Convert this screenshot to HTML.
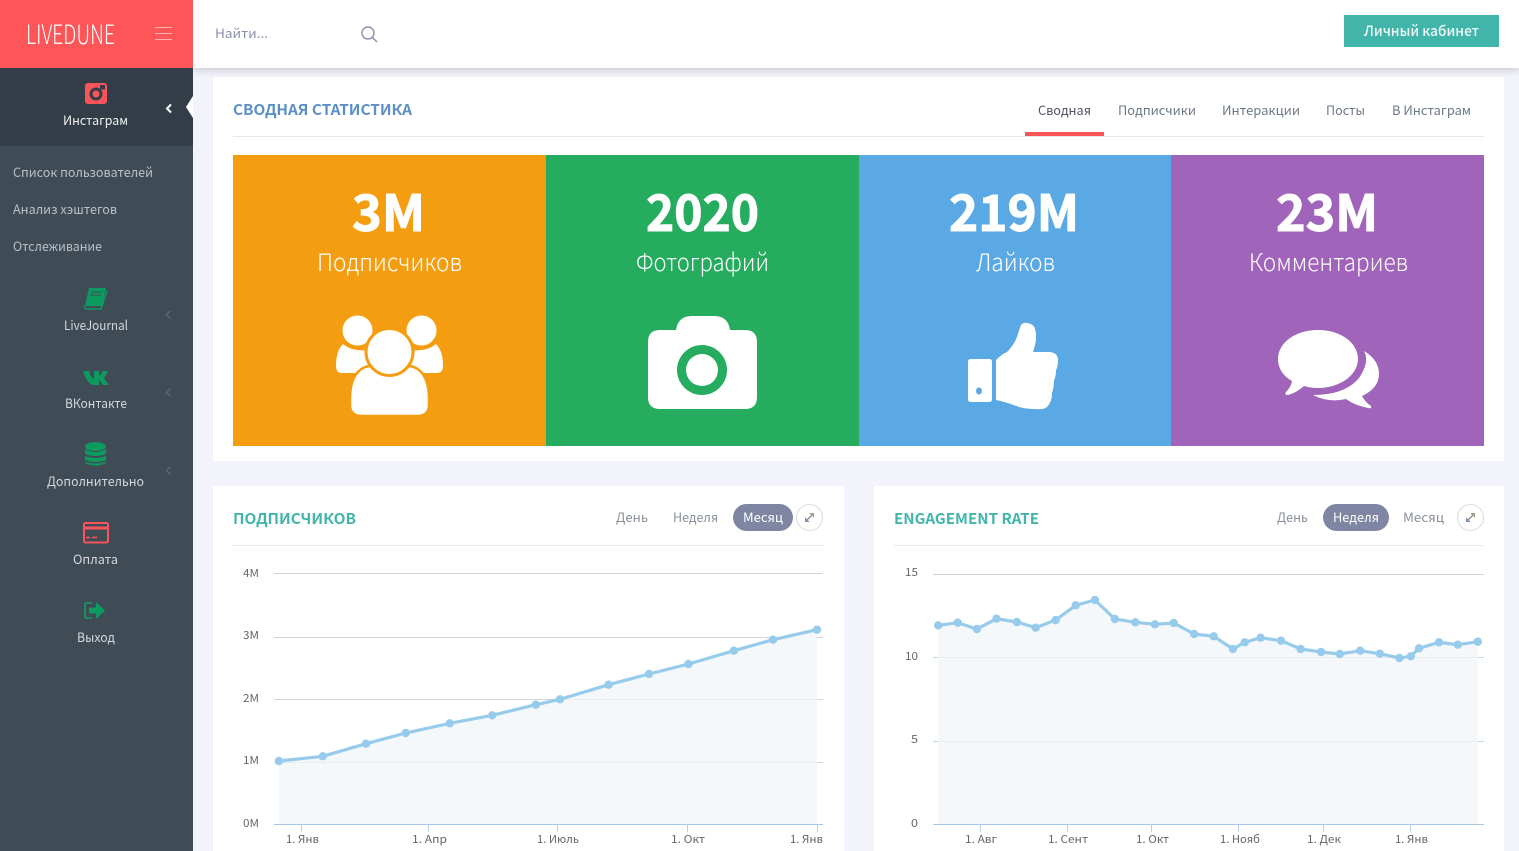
<!DOCTYPE html>
<html lang="ru"><head><meta charset="utf-8"><title>LiveDune</title>
<style>
html,body{margin:0;padding:0;width:1519px;height:851px;overflow:hidden;background:#f2f3fb}
body{position:relative;font-family:"Noto Sans CJK JP","Liberation Sans",sans-serif}
div{position:absolute}
svg{position:absolute;left:0;top:0}
text{font-family:"Noto Sans CJK JP","Liberation Sans",sans-serif;font-size:13px}
.side{fill:#d3d7da}
.sub{fill:#b9c0c5}
.tab{fill:#6d7887}
.big{font-size:50px;font-weight:700;fill:#fff;stroke:#fff;stroke-width:1}
.lab{font-size:24px;fill:#fff;font-weight:300}
.ttl{font-size:15px;font-weight:700}
.ax{font-size:11px;fill:#666}
.pill{fill:#8a919c}
</style></head><body>
<div style="left:193px;top:0;width:1326px;height:68px;background:#fff;box-shadow:0 2px 7px rgba(90,90,110,.28)"></div>
<div style="left:0;top:68px;width:193px;height:783px;background:#3f4c56"></div>
<div style="left:0;top:68px;width:193px;height:78px;background:#323d47"></div>
<div style="left:0;top:0;width:193px;height:68px;background:#fd5558"></div>
<div style="left:213px;top:77px;width:1291px;height:384px;background:#fff"></div>
<div style="left:213px;top:486px;width:631px;height:365px;background:#fff"></div>
<div style="left:874px;top:486px;width:630px;height:365px;background:#fff"></div>
<div style="left:233px;top:155px;width:313px;height:291px;background:#f59d10"></div>
<div style="left:546px;top:155px;width:313px;height:291px;background:#26ac5e"></div>
<div style="left:859px;top:155px;width:312px;height:291px;background:#5aa9e4"></div>
<div style="left:1171px;top:155px;width:313px;height:291px;background:#a064bb"></div>
<div style="left:1344px;top:15px;width:155px;height:32px;background:#42b5ab"></div>
<div style="left:233px;top:136px;width:1251px;height:1px;background:#e6e7ec"></div>
<div style="left:1025px;top:132px;width:79px;height:4px;background:#f9545a"></div>
<div style="left:233px;top:545px;width:590px;height:1px;background:#e6eaee"></div>
<div style="left:894px;top:545px;width:590px;height:1px;background:#e6eaee"></div>

<svg width="1519" height="851" viewBox="0 0 1519 851">
<!-- logo + header -->
<text x="26" y="44" textLength="89" lengthAdjust="spacingAndGlyphs" style="font-size:27px;font-weight:300;fill:#fff">LIVEDUNE</text>
<path d="M155 27.500H172M155 33.500H172M155 39.500H172" stroke="#ffb3b3" stroke-width="1" fill="none"/>
<text x="215" y="38" textLength="53" lengthAdjust="spacingAndGlyphs" style="fill:#8a90a8">Найти...</text>
<circle cx="368" cy="33" r="6" fill="none" stroke="#8a90a8" stroke-width="1.400"/>
<path d="M372.500 37.500L377 42" stroke="#8a90a8" stroke-width="1.500" fill="none"/>
<text x="1364" y="36" textLength="115" lengthAdjust="spacingAndGlyphs" style="font-size:14px;font-weight:500;fill:#f1fbfa">Личный кабинет</text>

<!-- sidebar -->
<rect x="85" y="83" width="22" height="21" rx="3" fill="#f9545a"/>
<circle cx="96" cy="94" r="6.500" fill="#323d47"/><circle cx="96" cy="94" r="3.500" fill="#f9545a"/>
<rect x="100" y="85" width="5" height="4.500" fill="#323d47"/>
<text x="63" y="125" textLength="65" lengthAdjust="spacingAndGlyphs" style="fill:#eef0f1">Инстаграм</text>
<path d="M171 104.500L167 108.500L171 112.500" fill="none" stroke="#fff" stroke-width="2"/>
<path d="M193 96L186 107L193 118Z" fill="#fff"/>
<text class="sub" x="13" y="177" textLength="140" lengthAdjust="spacingAndGlyphs">Список пользователей</text>
<text class="sub" x="13" y="214" textLength="104" lengthAdjust="spacingAndGlyphs">Анализ хэштегов</text>
<text class="sub" x="13" y="251" textLength="89" lengthAdjust="spacingAndGlyphs">Отслеживание</text>

<path d="M89 288H106L102 306H85Z" fill="#0d9a5e"/>
<path d="M84 306Q85 309 88 309H101L107 291" fill="none" stroke="#0d9a5e" stroke-width="1.500"/>
<path d="M91 292H102M90 295H101" stroke="#3f4c56" stroke-width="1"/>
<text class="side" x="64" y="330" textLength="64" lengthAdjust="spacingAndGlyphs">LiveJournal</text>
<path d="M170.500 310.500L166.500 314.500L170.500 318.500" fill="none" stroke="#5b666f" stroke-width="1.500"/>

<path d="M83 371H89Q91 378 94 379V371H99V376Q101 375 103 371H108Q106 376 103.500 378Q106 380 108.500 385H103Q100 380 99 380V385H94Q87 384 83 371Z" fill="#0d9a5e"/>
<text class="side" x="65" y="408" textLength="62" lengthAdjust="spacingAndGlyphs">ВКонтакте</text>
<path d="M170.500 388.500L166.500 392.500L170.500 396.500" fill="none" stroke="#5b666f" stroke-width="1.500"/>

<ellipse cx="95.500" cy="446.500" rx="10.500" ry="4.500" fill="#0d9a5e"/>
<path d="M85 449Q95.500 455 106 449V454Q95.500 458 85 454ZM85 456Q95.500 460 106 456V460Q95.500 464 85 460ZM85 461.500Q95.500 465.500 106 461.500V463Q95.500 468 85 463Z" fill="#0d9a5e"/>
<text class="side" x="47" y="486" textLength="97" lengthAdjust="spacingAndGlyphs">Дополнительно</text>
<path d="M170.500 466.500L166.500 470.500L170.500 474.500" fill="none" stroke="#5b666f" stroke-width="1.500"/>

<rect x="84" y="523" width="24" height="19.500" rx="1.500" fill="none" stroke="#f9545a" stroke-width="2"/>
<rect x="84" y="526.500" width="24" height="3" fill="#f9545a"/>
<path d="M86 537.500H90M92 537.500H97" stroke="#f9545a" stroke-width="1.500"/>
<text class="side" x="73" y="564" textLength="45" lengthAdjust="spacingAndGlyphs">Оплата</text>

<path d="M92 603H87Q85 603 85 605V616Q85 618 87 618H92" fill="none" stroke="#0d9a5e" stroke-width="1.800"/>
<path d="M89 607.500H96V602L105 610.500L96 619V613.500H89Z" fill="#0d9a5e"/>
<text class="side" x="77" y="642" textLength="38" lengthAdjust="spacingAndGlyphs">Выход</text>

<!-- summary header -->
<text class="ttl" x="233" y="115" textLength="179" lengthAdjust="spacingAndGlyphs" fill="#5b8fc6">СВОДНАЯ СТАТИСТИКА</text>
<text x="1038" y="115" textLength="53" lengthAdjust="spacingAndGlyphs" style="fill:#4f5662">Сводная</text>
<text class="tab" x="1118" y="115" textLength="78" lengthAdjust="spacingAndGlyphs">Подписчики</text>
<text class="tab" x="1222" y="115" textLength="78" lengthAdjust="spacingAndGlyphs">Интеракции</text>
<text class="tab" x="1326" y="115" textLength="39" lengthAdjust="spacingAndGlyphs">Посты</text>
<text class="tab" x="1392" y="115" textLength="79" lengthAdjust="spacingAndGlyphs">В Инстаграм</text>

<!-- tiles -->
<text class="big" x="352" y="231" textLength="73" lengthAdjust="spacingAndGlyphs">3M</text>
<text class="big" x="646" y="231" textLength="113" lengthAdjust="spacingAndGlyphs">2020</text>
<text class="big" x="949" y="231" textLength="130" lengthAdjust="spacingAndGlyphs">219M</text>
<text class="big" x="1276" y="231" textLength="102" lengthAdjust="spacingAndGlyphs">23M</text>
<text class="lab" x="317" y="271" textLength="145" lengthAdjust="spacingAndGlyphs">Подписчиков</text>
<text class="lab" x="636" y="271" textLength="133" lengthAdjust="spacingAndGlyphs">Фотографий</text>
<text class="lab" x="976" y="271" textLength="79" lengthAdjust="spacingAndGlyphs">Лайков</text>
<text class="lab" x="1249" y="271" textLength="159" lengthAdjust="spacingAndGlyphs">Комментариев</text>

<!-- users icon -->
<path d="M343 344Q352 352 370 350V373H342Q336 373 336 366Q336 351 343 344Z" fill="#fff"/>
<path d="M436 344Q427 352 409 350V373H437Q443 373 443 366Q443 351 436 344Z" fill="#fff"/>
<circle cx="357.500" cy="330.500" r="16" fill="#fff" stroke="#f59d10" stroke-width="2"/>
<circle cx="421.500" cy="330.500" r="16" fill="#fff" stroke="#f59d10" stroke-width="2"/>
<path d="M350 398C350 380 357 368 369 366H410C422 368 429 380 429 398V405Q429 416 417 416H362Q350 416 350 405Z" fill="#fff" stroke="#f59d10" stroke-width="2.500"/>
<circle cx="389.500" cy="352" r="23.500" fill="#fff" stroke="#f59d10" stroke-width="3"/>

<!-- camera -->
<path d="M648 342Q648 330 660 330H676Q678 316 692 316H714Q728 316 730 330H745Q757 330 757 342V397Q757 409 745 409H660Q648 409 648 397Z" fill="#fff"/>
<circle cx="702" cy="370" r="25" fill="#26ac5e"/><circle cx="702" cy="370" r="16" fill="#fff"/>

<!-- thumb -->
<rect x="968" y="359" width="24" height="43" rx="2.500" fill="#fff"/><ellipse cx="979" cy="391" rx="3" ry="3.500" fill="#5aa9e4"/>
<path d="M996 360Q1002 354 1007 352Q1014 345 1017 337Q1019 330 1021 325Q1024 322 1027 323Q1034 324 1035 329Q1038 337 1033 352H1050Q1058 353 1058 360Q1058 367 1056 370Q1056 377 1054 380Q1054 388 1052 393Q1052 402 1047 407Q1043 410 1035 409Q1026 409 1019 407Q1006 402 996 400Z" fill="#fff"/>

<!-- chat -->
<path d="M1364 351Q1379 360 1379 374Q1379 388 1362 396Q1365 402 1371 406Q1372 409 1368 408Q1354 405 1346 399Q1328 403 1313 395Q1345 395 1359 378Q1370 362 1364 351Z" fill="#fff"/>
<path d="M1318 330C1341 330 1358 343 1358 359C1358 375 1340 388 1318 388Q1310 388 1304 386Q1296 393 1288 395Q1284 395 1286 392Q1291 387 1292 381C1283 376 1278 368 1278 359C1278 343 1295 330 1318 330Z" fill="#fff"/>

<!-- chart 1 -->
<text class="ttl" x="233" y="524" textLength="123" lengthAdjust="spacingAndGlyphs" fill="#42b5ab">ПОДПИСЧИКОВ</text>
<text class="pill" x="616" y="522" textLength="32" lengthAdjust="spacingAndGlyphs">День</text>
<text class="pill" x="673" y="522" textLength="45" lengthAdjust="spacingAndGlyphs">Неделя</text>
<rect x="733" y="504" width="60" height="27" rx="13.500" fill="#7f86a3"/>
<text x="743" y="522" textLength="40" lengthAdjust="spacingAndGlyphs" style="fill:#fff">Месяц</text>
<circle cx="809.500" cy="517.500" r="13" fill="#fff" stroke="#dcdcdc"/>
<path d="M806 521L813 514" stroke="#8a919c" stroke-width="1.400"/>
<path d="M810.500 513.500H813.500V516.500Z" fill="#a89a88" stroke="#a89a88"/><path d="M805.500 518.500V521.500H808.500Z" fill="#7d95ad" stroke="#7d95ad"/>

<path d="M274 573.500H823M274 637.500H823M274 699.500H823M274 762.500H823" stroke="#cdd5da" fill="none"/>
<path d="M279 761L322.800 756.300L366 743.700L405.700 733L449.700 723.300L492.200 715.300L535.900 704.700L560 699.300L608.600 684.700L649 674L688.500 664L733.900 650.700L773 639.700L817 629.700V824H279Z" fill="#f4f8fb"/>
<path d="M560 699.500H817M279 762.500H817" stroke="#e6eef1" fill="none"/>
<path d="M274 824.500H823" stroke="#a9c8e8"/>
<path d="M301.500 824V832M428.500 824V832M557.500 824V832M687.500 824V832M817.500 824V832" stroke="#b9cfe4"/>
<polyline points="279,761 322.800,756.300 366,743.700 405.700,733 449.700,723.300 492.200,715.300 535.900,704.700 560,699.300 608.600,684.700 649,674 688.500,664 733.900,650.700 773,639.700 817,629.700" fill="none" stroke="#97cbec" stroke-width="3.200"/>
<g fill="#97cbec">
<circle cx="279" cy="761" r="4.200"/><circle cx="322.800" cy="756.300" r="4.200"/><circle cx="366" cy="743.700" r="4.200"/><circle cx="405.700" cy="733" r="4.200"/><circle cx="449.700" cy="723.300" r="4.200"/><circle cx="492.200" cy="715.300" r="4.200"/><circle cx="535.900" cy="704.700" r="4.200"/><circle cx="560" cy="699.300" r="4.200"/><circle cx="608.600" cy="684.700" r="4.200"/><circle cx="649" cy="674" r="4.200"/><circle cx="688.500" cy="664" r="4.200"/><circle cx="733.900" cy="650.700" r="4.200"/><circle cx="773" cy="639.700" r="4.200"/><circle cx="817" cy="629.700" r="4.200"/>
</g>
<text class="ax" x="243" y="577" textLength="16" lengthAdjust="spacingAndGlyphs">4M</text>
<text class="ax" x="243" y="639" textLength="16" lengthAdjust="spacingAndGlyphs">3M</text>
<text class="ax" x="243" y="702" textLength="16" lengthAdjust="spacingAndGlyphs">2M</text>
<text class="ax" x="243" y="764" textLength="16" lengthAdjust="spacingAndGlyphs">1M</text>
<text class="ax" x="243" y="827" textLength="16" lengthAdjust="spacingAndGlyphs">0M</text>
<text class="ax" x="286" y="843" textLength="33" lengthAdjust="spacingAndGlyphs">1. Янв</text>
<text class="ax" x="412" y="843" textLength="35" lengthAdjust="spacingAndGlyphs">1. Апр</text>
<text class="ax" x="537" y="843" textLength="42" lengthAdjust="spacingAndGlyphs">1. Июль</text>
<text class="ax" x="671" y="843" textLength="34" lengthAdjust="spacingAndGlyphs">1. Окт</text>
<text class="ax" x="790" y="843" textLength="33" lengthAdjust="spacingAndGlyphs">1. Янв</text>

<!-- chart 2 -->
<text class="ttl" x="894" y="524" textLength="145" lengthAdjust="spacingAndGlyphs" fill="#42b5ab">ENGAGEMENT RATE</text>
<text class="pill" x="1277" y="522" textLength="31" lengthAdjust="spacingAndGlyphs">День</text>
<rect x="1323" y="504" width="66" height="27" rx="13.500" fill="#7f86a3"/>
<text x="1333" y="522" textLength="46" lengthAdjust="spacingAndGlyphs" style="fill:#fff">Неделя</text>
<text class="pill" x="1403" y="522" textLength="41" lengthAdjust="spacingAndGlyphs">Месяц</text>
<circle cx="1470.500" cy="517.500" r="13" fill="#fff" stroke="#dcdcdc"/>
<path d="M1467 521L1474 514" stroke="#8a919c" stroke-width="1.400"/>
<path d="M1471.500 513.500H1474.500V516.500Z" fill="#a89a88" stroke="#a89a88"/><path d="M1466.500 518.500V521.500H1469.500Z" fill="#7d95ad" stroke="#7d95ad"/>

<path d="M933 574.500H1484M933 657.500H1484M933 741.500H1484" stroke="#cdd5da" fill="none"/>
<path d="M938.200 625.300L957.800 622.700L976.900 629L996.500 618.700L1016.900 622L1035.700 627.700L1055.700 620L1075.700 605.300L1094.900 600L1114.900 619L1135.300 622.300L1154.900 624.300L1173.700 623L1194.100 634L1213.700 636.300L1232.900 649L1244.700 642.300L1260.600 637.700L1281 640.700L1300.600 649L1321 652L1339.800 654L1360.200 650.700L1379.800 653.700L1399.400 658L1410.800 656.300L1419 648.300L1439 642.300L1457.800 644.700L1477.800 641.700V824H938.200Z" fill="#f4f8fb"/>
<path d="M938 657.500H1478M938 741.500H1478" stroke="#e6eef1" fill="none"/>
<path d="M933 824.500H1484" stroke="#a9c8e8"/>
<path d="M980.500 824V832M1067.500 824V832M1151.500 824V832M1238.500 824V832M1323.500 824V832M1410.500 824V832" stroke="#b9cfe4"/>
<polyline points="938.200,625.300 957.800,622.700 976.900,629 996.500,618.700 1016.900,622 1035.700,627.700 1055.700,620 1075.700,605.300 1094.900,600 1114.900,619 1135.300,622.300 1154.900,624.300 1173.700,623 1194.100,634 1213.700,636.300 1232.900,649 1244.700,642.300 1260.600,637.700 1281,640.700 1300.600,649 1321,652 1339.800,654 1360.200,650.700 1379.800,653.700 1399.400,658 1410.800,656.300 1419,648.300 1439,642.300 1457.800,644.700 1477.800,641.700" fill="none" stroke="#97cbec" stroke-width="3.200"/>
<g fill="#97cbec">
<circle cx="938.200" cy="625.300" r="4.200"/><circle cx="957.800" cy="622.700" r="4.200"/><circle cx="976.900" cy="629" r="4.200"/><circle cx="996.500" cy="618.700" r="4.200"/><circle cx="1016.900" cy="622" r="4.200"/><circle cx="1035.700" cy="627.700" r="4.200"/><circle cx="1055.700" cy="620" r="4.200"/><circle cx="1075.700" cy="605.300" r="4.200"/><circle cx="1094.900" cy="600" r="4.200"/><circle cx="1114.900" cy="619" r="4.200"/><circle cx="1135.300" cy="622.300" r="4.200"/><circle cx="1154.900" cy="624.300" r="4.200"/><circle cx="1173.700" cy="623" r="4.200"/><circle cx="1194.100" cy="634" r="4.200"/><circle cx="1213.700" cy="636.300" r="4.200"/><circle cx="1232.900" cy="649" r="4.200"/><circle cx="1244.700" cy="642.300" r="4.200"/><circle cx="1260.600" cy="637.700" r="4.200"/><circle cx="1281" cy="640.700" r="4.200"/><circle cx="1300.600" cy="649" r="4.200"/><circle cx="1321" cy="652" r="4.200"/><circle cx="1339.800" cy="654" r="4.200"/><circle cx="1360.200" cy="650.700" r="4.200"/><circle cx="1379.800" cy="653.700" r="4.200"/><circle cx="1399.400" cy="658" r="4.200"/><circle cx="1410.800" cy="656.300" r="4.200"/><circle cx="1419" cy="648.300" r="4.200"/><circle cx="1439" cy="642.300" r="4.200"/><circle cx="1457.800" cy="644.700" r="4.200"/><circle cx="1477.800" cy="641.700" r="4.200"/>
</g>
<text class="ax" x="905" y="576" textLength="13" lengthAdjust="spacingAndGlyphs">15</text>
<text class="ax" x="905" y="660" textLength="13" lengthAdjust="spacingAndGlyphs">10</text>
<text class="ax" x="911" y="743" textLength="7" lengthAdjust="spacingAndGlyphs">5</text>
<text class="ax" x="911" y="827" textLength="7" lengthAdjust="spacingAndGlyphs">0</text>
<text class="ax" x="965" y="843" textLength="32" lengthAdjust="spacingAndGlyphs">1. Авг</text>
<text class="ax" x="1048" y="843" textLength="40" lengthAdjust="spacingAndGlyphs">1. Сент</text>
<text class="ax" x="1136" y="843" textLength="33" lengthAdjust="spacingAndGlyphs">1. Окт</text>
<text class="ax" x="1220" y="843" textLength="40" lengthAdjust="spacingAndGlyphs">1. Нояб</text>
<text class="ax" x="1307" y="843" textLength="34" lengthAdjust="spacingAndGlyphs">1. Дек</text>
<text class="ax" x="1395" y="843" textLength="33" lengthAdjust="spacingAndGlyphs">1. Янв</text>
</svg>
</body></html>
